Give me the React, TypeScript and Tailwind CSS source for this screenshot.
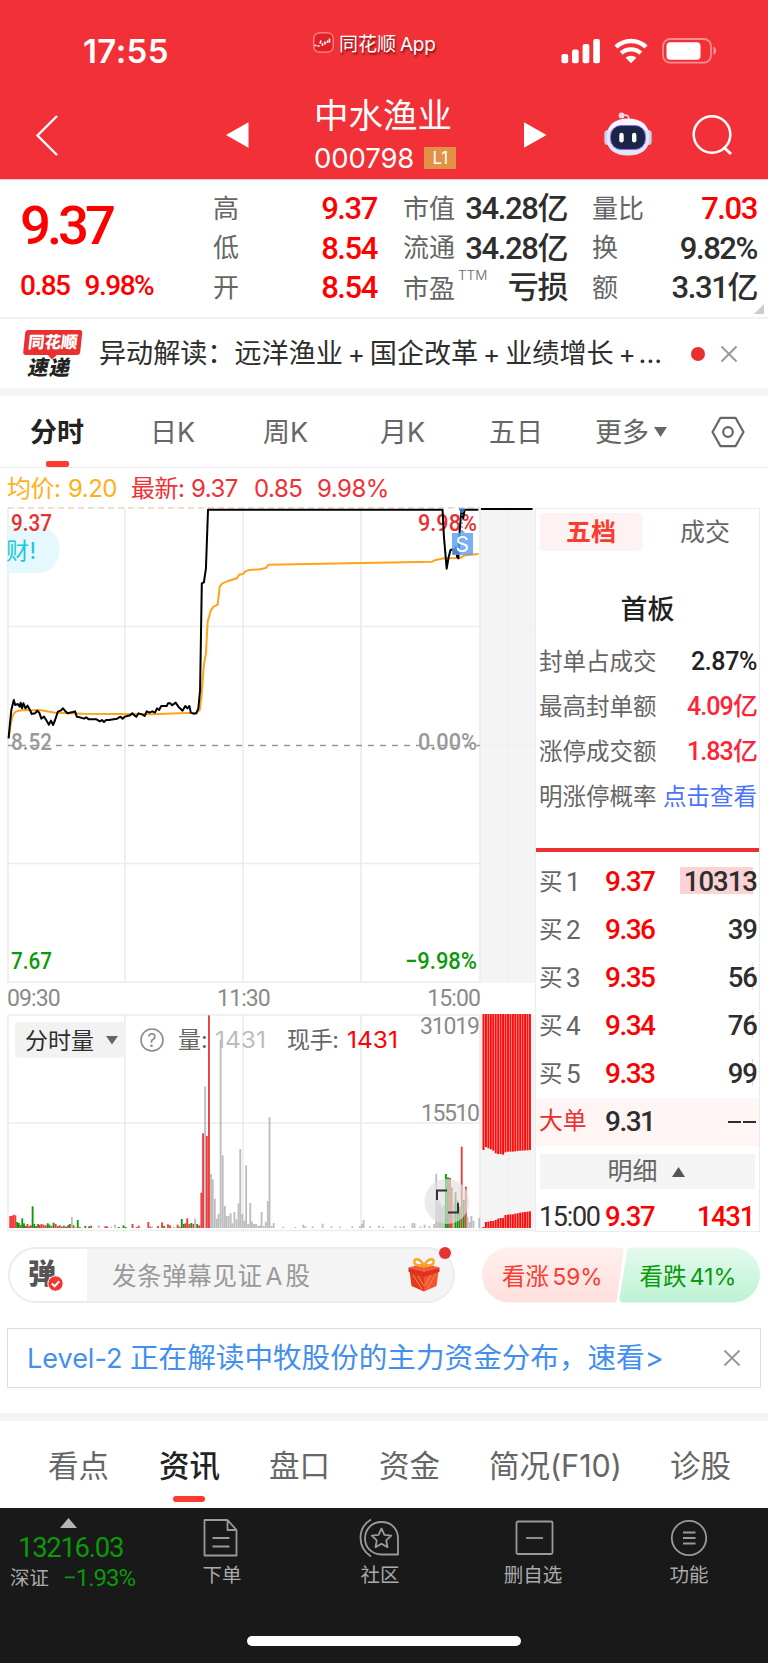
import type { ReactNode } from "react";

const NUM = "font-['Roboto','Noto_Sans_CJK_SC',sans-serif]";

function CloseIcon() {
    return (
        <svg className="h-[18px] w-[18px]" viewBox="0 0 18 18" fill="none" stroke="#999999" strokeWidth={1.9}>
            <path d="M1.5 1.5l15 15M16.5 1.5l-15 15" />
        </svg>
    );
}

function RobotIcon() {
    return (
        <svg className="h-[44px] w-[48px]" viewBox="0 0 48 44">
            <path d="M18 3.5c5-1.5 7 .5 7 4" fill="none" stroke="#e6e6fa" strokeWidth="1.6" />
            <circle cx="17.5" cy="3.4" r="2.9" fill="#f6d9e6" />
            <rect x="0.3" y="18" width="7" height="15" rx="3.5" fill="#c9cbf3" />
            <rect x="40.7" y="18" width="7" height="15" rx="3.5" fill="#c9cbf3" />
            <path d="M24 6.5C11 6.5 2.5 13 2.5 25.5S11 43.5 24 43.5s21.5-5.5 21.5-18S37 6.5 24 6.5z" fill="#e4e7fb" />
            <path d="M24 7C14 7 6 11 4 19c6-6 34-6 40 0C42 11 34 7 24 7z" fill="#f7f8ff" />
            <rect x="6.5" y="13.5" width="35" height="24" rx="10.5" fill="#1b2547" stroke="#8a6cf0" strokeWidth="1" />
            <rect x="15.300" y="20.8" width="4.4" height="9.6" rx="2.2" fill="#fff" />
            <rect x="28" y="20.8" width="4.4" height="9.6" rx="2.2" fill="#fff" />
        </svg>
    );
}

function StatusBar() {
    return (
        <div className="flex h-[84px] pl-[83px] text-white">
            <div className="w-[230px] pt-[35px] text-[33px] leading-none font-semibold tracking-[0.4px]">17:55</div>
            <div className="flex w-[247px] items-start gap-[5px] pt-[32px]">
                <svg className="h-[21px] w-[21px]" viewBox="0 0 21 21">
                    <rect x="0.8" y="0.8" width="19.4" height="19.4" rx="5.5" fill="#e02228" stroke="#ff8f92" strokeWidth="1.2" />
                    <path d="M1.5 13.5h2M4.5 14h2M7 11.5l1-3M9.5 11v3M12 12.5v-3M14.5 11V8.5M16.5 6.5v4" stroke="#fff" strokeWidth="1.6" />
                </svg>
                <span className="flex gap-[4px] pt-[3px] text-[19px] leading-none [text-shadow:1px_2px_2px_rgba(90,0,0,0.75)]">
                    <span>同花顺</span>
                    <span className="tracking-[-0.3px]">App</span>
                </span>
            </div>
            <div className="flex items-start pt-[38px]">
                <svg className="ml-[1px] h-[26px] w-[40px]" viewBox="0 0 40 26" fill="#fff">
                    <rect x="0.5" y="16" width="6.7" height="9.3" rx="2" />
                    <rect x="11" y="11.5" width="6.7" height="13.8" rx="2" />
                    <rect x="21.6" y="6" width="6.7" height="19.3" rx="2" />
                    <rect x="32.2" y="1" width="6.7" height="24.3" rx="2" />
                </svg>
                <svg className="ml-[13px] h-[26px] w-[34px]" viewBox="0 0 34 26" fill="none" stroke="#fff" strokeWidth="4.4">
                    <path d="M2 9C10.5 .9 23.5 .9 32 9" />
                    <path d="M7.2 15.2c5.6-5.1 14-5.1 19.6 0" />
                    <path d="M17 25.3l-5.4-5.5c3-2.7 7.800-2.7 10.8 0z" fill="#fff" stroke="none" />
                </svg>
                <svg className="ml-[14px] h-[26px] w-[55px]" viewBox="0 0 55 26">
                    <rect x="1" y="1" width="48" height="23.6" rx="7" fill="none" stroke="#fff" strokeOpacity=".45" strokeWidth="1.8" />
                    <rect x="4.5" y="4.3" width="34" height="17.5" rx="3.8" fill="#fff" />
                    <path d="M51.5 8.500c3.500 1.500 3.500 7 0 8.500z" fill="#fff" fillOpacity=".5" />
                </svg>
            </div>
        </div>
    );
}

function Header() {
    return (
        <header className="h-[179px] bg-[#f23037] text-white">
            <StatusBar />
            <div className="flex h-[95px]">
                <svg className="mt-[31px] ml-[35px] h-[41px] w-[24px]" viewBox="0 0 24 41" fill="none" stroke="#fff" strokeWidth="2.4">
                    <path d="M22 1L2.5 20.5 22 40" />
                </svg>
                <svg className="mt-[38px] ml-[167px] h-[26px] w-[23px]" viewBox="0 0 23 26" fill="#fff">
                    <path d="M0 13L22.5 .3v25.4z" />
                </svg>
                <div className="ml-[65px] w-[145px]">
                    <h1 className="mt-[15px] text-[34.5px] leading-none">中水渔业</h1>
                    <div className="mt-[10px] flex items-center">
                        <span className="text-[27.5px] leading-[29px] tracking-[-0.1px]">000798</span>
                        <span className="ml-[10px] h-[22px] w-[32px] bg-[#e39147] text-center text-[17px] leading-[22px]">L1</span>
                    </div>
                </div>
                <svg className="mt-[38px] ml-[65px] h-[26px] w-[23px]" viewBox="0 0 23 26" fill="#fff">
                    <path d="M22.5 13L0 .3v25.4z" />
                </svg>
                <div className="mt-[28px] ml-[57px]">
                    <RobotIcon />
                </div>
                <svg className="mt-[30px] ml-[40px] h-[42px] w-[42px]" viewBox="0 0 42 42" fill="none" stroke="#fff" strokeWidth="2.5">
                    <circle cx="20" cy="20.5" r="18.3" />
                    <path d="M31.5 33l7.5 7" strokeWidth="3" />
                </svg>
            </div>
        </header>
    );
}

function Stat({ label, value, red }: { label: ReactNode; value: string; red?: boolean }) {
    return (
        <div className="flex h-[39.5px] items-center justify-between">
            <span className="text-[26px] leading-none text-[#666666]">{label}</span>
            <span className={`${NUM} text-[31px] leading-none font-medium tracking-[-1.4px] ${red ? "text-[#ff0000]" : "text-[#2e2e2e]"}`}>{value}</span>
        </div>
    );
}

function Quote() {
    return (
        <section className="relative flex h-[140px] border-t border-b-2 border-t-[#fbc5c7] border-b-[#f2f2f2] pt-[9px]">
            <div className={`${NUM} ml-[20px] w-[193px] text-[#ff0000]`}>
                <div className="mt-[9px] text-[54.5px] leading-none font-medium tracking-[-4px]">9.37</div>
                <div className="mt-[19px] flex gap-[15px] text-[28px] leading-none font-medium tracking-[-1.5px]">
                    <span>0.85</span>
                    <span>9.98%</span>
                </div>
            </div>
            <div className="w-[164px]">
                <Stat label="高" value="9.37" red />
                <Stat label="低" value="8.54" red />
                <Stat label="开" value="8.54" red />
            </div>
            <div className="ml-[26px] w-[164px]">
                <Stat label="市值" value="34.28亿" />
                <Stat label="流通" value="34.28亿" />
                <Stat
                    label={
                        <span className="flex pt-[3px]">
                            市盈<span className="-mt-[7px] ml-[3px] text-[13.5px] font-light">TTM</span>
                        </span>
                    }
                    value="亏损"
                />
            </div>
            <div className="ml-[25px] w-[165px]">
                <Stat label="量比" value="7.03" red />
                <Stat label="换" value="9.82%" />
                <Stat label="额" value="3.31亿" />
            </div>
            <svg className="absolute right-[4px] bottom-[3px] h-[10px] w-[10px]" viewBox="0 0 10 10">
                <path d="M10 0v10H0z" fill="#cccccc" />
            </svg>
        </section>
    );
}

function Plus() {
    return <span className="w-[27px] text-center text-[26px]">+</span>;
}

function NewsStrip() {
    return (
        <section className="flex h-[69px] items-center">
            <div className="ml-[23px] w-[57px] -skew-x-6">
                <div className="relative rounded-[3px] bg-[#e93030] text-center text-[16.5px] leading-[25px] font-black text-white">
                    同花顺
                    <i className="absolute -bottom-[3px] left-[26px] h-[7px] w-[7px] rotate-45 bg-[#e93030]" />
                </div>
                <div className="mt-[3px] -skew-x-6 text-center text-[20.5px] leading-[20px] font-black tracking-[1px] text-[#222222]">速递</div>
            </div>
            <p className="ml-[19px] flex w-[592px] items-center text-[27.1px] leading-none text-[#2e2e2e]">
                异动解读：远洋渔业
                <Plus />
                国企改革
                <Plus />
                业绩增长
                <Plus />
                <span className="-ml-[2px]">...</span>
            </p>
            <i className="h-[14px] w-[14px] rounded-full bg-[#e93030]" />
            <div className="ml-[15px]">
                <CloseIcon />
            </div>
        </section>
    );
}

function PeriodTabs() {
    return (
        <nav className="flex h-[72px] items-start border-b-[1.5px] border-[#ececec] pt-[23px] text-[27px] leading-none text-[#666666]">
            <div className="ml-[30px] flex w-[120px] flex-col">
                <span className="font-bold text-[#222222]">分时</span>
                <i className="mt-[15px] ml-[16px] h-[6px] w-[23px] rounded-[2px] bg-[#fb3b30]" />
            </div>
            <span className="w-[113px]">日K</span>
            <span className="w-[117px]">周K</span>
            <span className="w-[109px]">月K</span>
            <span className="w-[106px]">五日</span>
            <span className="w-[59px]">更多</span>
            <svg className="mt-[8px] h-[10px] w-[13px]" viewBox="0 0 13 10" fill="#666666">
                <path d="M0 0h13L6.5 10z" />
            </svg>
            <svg className="-mt-[3px] ml-[44px] h-[32px] w-[34px]" viewBox="0 0 34 32" fill="none" stroke="#666666" strokeWidth="2.2">
                <path d="M9.5 1.8h15L32.5 16l-8 14.2h-15L1.5 16z" strokeLinejoin="round" />
                <circle cx="17" cy="16" r="4.8" />
            </svg>
        </nav>
    );
}

function Legend() {
    return (
        <div className="flex h-[39px] items-center pt-[2px] pl-[7px] text-[24px] leading-none tracking-[-0.5px] text-[#f03034]">
            <span className="w-[61px] text-[#ffb019]">均价:</span>
            <span className="w-[63px] text-[#ffb019]">9.20</span>
            <span className="w-[60px]">最新:</span>
            <span className="w-[63px]">9.37</span>
            <span className="w-[63px]">0.85</span>
            <span>9.98%</span>
        </div>
    );
}

const PRICE =
    "25,745 28,710 33,660 40,630 44,645 52,642 57,650 60,638 64,655 68,640 74,655 80,647 88,662 92,672 102,670 108,662 114,668 120,686 128,680 134,690 142,704 148,692 154,705 160,690 168,665 176,662 183,655 190,664 196,670 212,666 218,664 223,680 232,682 244,686 250,682 258,688 280,688 290,694 296,690 302,696 308,690 316,690 340,686 350,680 356,686 362,680 378,676 384,670 390,676 396,680 402,670 414,674 420,678 426,664 434,668 442,664 450,668 456,655 462,660 468,648 484,648 488,640 494,640 500,646 510,638 518,650 530,662 538,648 544,655 550,648 554,668 562,671 570,670 576,655 581,600 586,280 592,277 598,235 604,59 1285,59 1289,140 1297,236 1302,205 1308,180 1316,178 1318,192 1324,172 1327,200 1331,205 1335,120 1340,60 1345,85 1349,59 1389,59";
const AVERAGE =
    "25,745 30,710 36,680 42,668 50,663 70,660 120,661 160,668 240,671 340,672 440,673 520,670 570,668 580,660 585,620 592,525 598,490 603,395 612,362 620,350 632,344 638,290 646,280 665,272 688,265 694,254 706,252 712,244 724,240 755,238 772,234 780,224 1050,219 1255,215 1262,211 1290,205 1335,204 1350,196 1390,192";

function PriceChart() {
    return (
        <svg className="block h-[476px] w-[535px]" viewBox="0 0 535 476" fill="none">
            <rect x="480.5" y="1.5" width="54.5" height="475" fill="#f4f4f4" />
            <path d="M508.5 2v473M481 120h54M481 238h54M481 357h54" stroke="#eaeaea" strokeDasharray="2 2" />
            <path d="M8 1v474M125 1v474M243 1v474M361 1v474M480 1v474M8 119.5h472M8 356.5h472M7 475h473" stroke="#ececec" strokeWidth="1.6" />
            <path d="M8 .8h472" stroke="#e6cfae" strokeDasharray="6 4" strokeWidth="1.2" />
            <path d="M8 19h29c30 0 30 47 0 47H8z" fill="#e4f8fd" />
            <text x="6" y="51.5" fontSize="23" fill="#19c8da" textLength="30">财!</text>
            <path d="M8 238.5h472" stroke="#999999" strokeDasharray="6 6" strokeWidth="1.3" />
            <g className={`${NUM} font-medium`} fontSize="23">
                <text x="11" y="24" fill="#e93030" textLength="41" lengthAdjust="spacingAndGlyphs">9.37</text>
                <text x="418" y="24" fill="#e93030" textLength="59" lengthAdjust="spacingAndGlyphs">9.98%</text>
                <text x="11" y="243" fill="#999999" textLength="41" lengthAdjust="spacingAndGlyphs">8.52</text>
                <text x="418" y="243" fill="#999999" textLength="59" lengthAdjust="spacingAndGlyphs">0.00%</text>
                <text x="11" y="462" fill="#0a9a0a" textLength="41" lengthAdjust="spacingAndGlyphs">7.67</text>
                <text x="405" y="462" fill="#0a9a0a" textLength="72" lengthAdjust="spacingAndGlyphs">−9.98%</text>
            </g>
            <g transform="translate(0 -17) scale(.34439 .33333)" strokeLinejoin="round">
                <polyline points={AVERAGE} stroke="#ffa31a" strokeWidth="2" vectorEffect="non-scaling-stroke" />
                <polyline points={PRICE} stroke="#000" strokeWidth="2" vectorEffect="non-scaling-stroke" />
            </g>
            <path d="M481 2h51.5" stroke="#000" strokeWidth="2.2" />
            <path d="M459 2h6l-3 4z" fill="#2e6fd0" stroke="#2e6fd0" />
            <path d="M462 7v18" stroke="#4b8fe8" strokeDasharray="2 2" strokeWidth="1.2" />
            <path d="M452 26h8l2.5-3 2.5 3h8v22h-21z" fill="#5b9df0" fillOpacity=".82" />
            <text x="455.5" y="45" fontSize="21" fill="#fff">S</text>
        </svg>
    );
}

type Bar = [x: number, top: number, color: string];
const R = "#ee3a3a";
const G = "#0a9a0a";
const S = "#bdbdbd";

const VOLUME: Bar[] = [
    [27, 828, R], [32, 828, R], [37, 824, R], [42, 826, R], [47, 846, G], [52, 849, G], [57, 855, R], [62, 835, G], [67, 850, G], [72, 858, G],
    [77, 852, R], [82, 858, R], [87, 856, R], [92, 799, G], [97, 852, G], [102, 858, R], [108, 852, G], [113, 855, R], [118, 852, R], [124, 854, R],
    [130, 856, R], [136, 850, G], [141, 854, G], [147, 858, R], [153, 848, G], [159, 852, R], [165, 858, R], [171, 856, R], [177, 860, G], [183, 857, R],
    [189, 860, G], [195, 856, R], [200, 852, G], [206, 831, S], [211, 856, R], [217, 861, S], [223, 840, G], [229, 861, R], [245, 858, G], [256, 859, G],
    [262, 857, R], [284, 856, S], [303, 859, R], [308, 859, R], [320, 861, S], [331, 854, S], [342, 861, G], [356, 856, G], [362, 861, G], [382, 852, R],
    [394, 861, R], [400, 857, R], [428, 846, R], [434, 860, R], [440, 860, S], [456, 858, R], [468, 847, R], [474, 858, G], [485, 853, R], [491, 856, R],
    [502, 860, S], [513, 854, R], [519, 860, R], [525, 837, G], [531, 852, G], [536, 850, R], [541, 835, R], [547, 852, R], [553, 849, G], [559, 852, R],
    [564, 836, S], [570, 852, G], [576, 856, R], [582, 758, R], [587, 580, R], [593, 439, S], [598, 588, R], [604, 226, R], [610, 702, S], [615, 718, S],
    [621, 776, S], [627, 836, S], [632, 822, S], [638, 300, S], [644, 646, S], [650, 798, S], [655, 828, S], [661, 828, S], [667, 820, S], [672, 850, S],
    [678, 816, S], [684, 838, S], [690, 790, S], [695, 627, S], [701, 822, S], [707, 842, S], [712, 676, S], [718, 852, S], [724, 789, S], [729, 845, S],
    [735, 852, S], [741, 852, S], [747, 858, S], [752, 856, S], [757, 816, S], [763, 858, S], [769, 845, S], [775, 783, S], [780, 532, S], [786, 858, S],
    [792, 849, S], [820, 860, S], [855, 861, S], [878, 854, S], [884, 858, S], [905, 859, S], [934, 851, S], [960, 859, S], [985, 860, S], [1020, 859, S],
    [1042, 858, S], [1048, 852, S], [1053, 840, S], [1072, 859, S], [1098, 857, S], [1110, 860, S], [1145, 858, S], [1160, 860, S], [1170, 858, S], [1195, 849, S],
    [1201, 850, S], [1218, 860, S], [1230, 854, S], [1244, 858, S], [1258, 852, S], [1264, 701, S], [1270, 780, S], [1275, 790, S], [1281, 802, S], [1287, 795, S],
    [1292, 702, G], [1298, 712, G], [1304, 714, R], [1309, 742, R], [1315, 790, S], [1320, 757, G], [1326, 782, G], [1332, 800, G], [1338, 620, R], [1344, 780, G],
    [1350, 740, R], [1355, 830, S], [1361, 846, S], [1366, 828, S], [1372, 842, S], [1389, 834, S],
];

const AUCTION: [number, number][] = [
    [630, 861], [621, 846], [625, 845], [628, 843], [632, 843], [640, 840], [642, 836], [642, 834], [644, 834], [637, 825],
    [635, 824], [635, 823], [635, 823], [634, 821], [633, 820], [632, 818], [632, 817], [631, 816], [631, 815], [630, 814],
];

function VolumeChart() {
    return (
        <svg className="block h-[218px] w-[535px]" viewBox="0 0 535 218" fill="none">
            <rect x="480.5" y="1" width="54.5" height="215" fill="#f4f4f4" />
            <path d="M8 1v216M125 1v216M243 1v216M361 1v216M480 1v216M8 1h472M8 109h472M7 216.5h528" stroke="#ececec" strokeWidth="1.6" />
            <path d="M508.5 140v74" stroke="#e4e4e4" strokeDasharray="2 2" />
            <rect x="15" y="8" width="111" height="35.5" rx="3" fill="#f2f2f2" />
            <text x="25" y="34.5" fontSize="23" fill="#2e2e2e" textLength="69">分时量</text>
            <path d="M106 22h12l-6 8.5z" fill="#666666" />
            <circle cx="152" cy="26" r="11" stroke="#8a8a8a" strokeWidth="1.6" />
            <text x="147.2" y="32.5" fontSize="18" fill="#8a8a8a">?</text>
            <g transform="translate(0 -74) scale(.34439 .33333)">
                {VOLUME.map(([x, top, color]) => (
                    <rect key={x} x={x} y={top} width="5.4" height={864 - top} fill={color} />
                ))}
                {AUCTION.map(([upper, lower], i) => (
                    <g key={i} fill="#ff0d0d">
                        <rect x={1401 + i * 7.1} y="222" width="5.8" height={upper - 222} />
                        <rect x={1401 + i * 7.1} y={lower} width="5.8" height={864 - lower} />
                    </g>
                ))}
            </g>
            <g fontSize="23">
                <text x="178" y="34" fill="#666666">量:</text>
                <text x="287" y="34" fill="#666666" textLength="52">现手:</text>
                <text x="215" y="34" fill="#bdbdbd" textLength="51" lengthAdjust="spacingAndGlyphs">1431</text>
                <text x="347" y="34" fill="#ff0000" textLength="51" lengthAdjust="spacingAndGlyphs">1431</text>
            </g>
            <g className={NUM} fontSize="23" fill="#8a8a8a">
                <text x="420" y="20" textLength="60">31019</text>
                <text x="421" y="107" textLength="59">15510</text>
            </g>
            <circle cx="447" cy="187.5" r="22.5" fill="#e0e0e0" fillOpacity=".68" />
            <path d="M437 186v-9.5h10M448 198.5h10v-9.5" stroke="#333333" strokeWidth="2" />
        </svg>
    );
}

function SealRow({ label, value, tone }: { label: string; value: string; tone: string }) {
    return (
        <div className="flex h-[45.1px] items-center justify-between pr-[2px] pl-[3px] text-[23.5px] leading-none">
            <span className="text-[#666666]">{label}</span>
            <span className={tone}>{value}</span>
        </div>
    );
}

const bids = [
    { level: "1", price: "9.37", qty: "10313", mark: "w-[73px] bg-[#fbd3d4]" },
    { level: "2", price: "9.36", qty: "39", mark: "w-0" },
    { level: "3", price: "9.35", qty: "56", mark: "w-px bg-[#fbd3d4]" },
    { level: "4", price: "9.34", qty: "76", mark: "w-px bg-[#fbd3d4]" },
    { level: "5", price: "9.33", qty: "99", mark: "w-px bg-[#fbd3d4]" },
];

function OrderBook() {
    return (
        <aside className="mt-px h-[724px] w-[225px] overflow-hidden border-[1.5px] border-[#ececec] text-[#2e2e2e]">
            <div className="mt-[4px] ml-[4px] flex h-[38px] text-[25px] leading-[39px]">
                <span className="w-[102px] rounded-[3px] bg-[#fff2f2] text-center font-bold text-[#fb3b30]">五档</span>
                <span className="ml-[38px] text-[#666666]">成交</span>
            </div>
            <h2 className="mt-[45px] text-center text-[27px] leading-none font-medium text-[#222222]">首板</h2>
            <div className="mt-[16px] h-[208px]">
                <SealRow label="封单占成交" value="2.87%" tone={`${NUM} text-[25px] font-medium tracking-[-0.4px] text-[#222222]`} />
                <SealRow label="最高封单额" value="4.09亿" tone={`${NUM} text-[25px] font-medium tracking-[-0.9px] text-[#ff2436]`} />
                <SealRow label="涨停成交额" value="1.83亿" tone={`${NUM} text-[25px] font-medium tracking-[-0.9px] text-[#ff2436]`} />
                <SealRow label="明涨停概率" value="点击查看" tone="text-[#4b72ff]" />
            </div>
            <div className="mt-px h-[4px] bg-[#ee3033]" />
            <div className="mt-[6px]">
                {bids.map((b) => (
                    <div key={b.level} className="relative flex h-[48px] items-center pr-[2px] pl-[3px]">
                        <i className={`absolute top-[9px] right-[6px] h-[27px] ${b.mark}`} />
                        <span className="w-[27px] text-[23.5px] leading-none text-[#666666]">买</span>
                        <span className={`${NUM} w-[39px] text-[26px] leading-none text-[#666666]`}>{b.level}</span>
                        <span className={`${NUM} text-[28px] leading-none font-medium tracking-[-1.5px] text-[#ff0000]`}>{b.price}</span>
                        <span className={`${NUM} relative ml-auto text-[27.5px] leading-none font-medium tracking-[-1px]`}>{b.qty}</span>
                    </div>
                ))}
            </div>
            <div className={`${NUM} flex h-[48px] items-center bg-[#fff5f5] pr-[3px] pl-[3px] text-[28px] leading-none font-medium`}>
                <span className="w-[66px] text-[23.8px] font-normal text-[#e93030]">大单</span>
                <span className="tracking-[-1.5px]">9.31</span>
                <span className="ml-auto flex gap-[2px]">
                    <i className="h-[2.5px] w-[13px] bg-[#2e2e2e]" />
                    <i className="h-[2.5px] w-[13px] bg-[#2e2e2e]" />
                </span>
            </div>
            <div className="mx-[4px] mt-[8px] flex h-[35px] items-center justify-center gap-[14px] bg-[#f4f4f4] pr-[3px] text-[25px] leading-none text-[#666666]">
                明细
                <svg className="h-[10px] w-[13px]" viewBox="0 0 13 10" fill="#555555">
                    <path d="M0 10h13L6.5 0z" />
                </svg>
            </div>
            <div className={`${NUM} mt-[13px] flex items-center pr-[5px] pl-[3px] text-[27.5px] leading-[30px] font-medium tracking-[-1.3px]`}>
                <span className="w-[66px] text-[27px] font-normal">15:00</span>
                <span className="text-[#ff0000]">9.37</span>
                <span className="ml-auto text-[#ff0000]">1431</span>
            </div>
        </aside>
    );
}

function Market() {
    return (
        <section className="flex h-[725px]">
            <div className="w-[535px]">
                <PriceChart />
                <div className={`${NUM} flex h-[31px] items-center justify-between pr-[55px] pl-[7px] text-[23px] leading-none tracking-[-0.9px] text-[#8a8a8a]`}>
                    <span>09:30</span>
                    <span>11:30</span>
                    <span>15:00</span>
                </div>
                <VolumeChart />
            </div>
            <OrderBook />
        </section>
    );
}

function GiftIcon() {
    return (
        <svg className="h-[35px] w-[32px]" viewBox="0 0 32 35">
            <path d="M1.5 14L16 19v15.5L3.5 29z" fill="#e5391f" />
            <path d="M30.5 14L16 19v15.5L28.5 29z" fill="#f0552f" />
            <path d="M5 18l9 14M10 19l6 10M28 17l-9 15M23 18l-6 11" stroke="#f98a55" strokeWidth="1" />
            <path d="M.5 10.5L16 14.500l15.500-4v4.300L16 20 .5 14.800z" fill="#dc3320" />
            <path d="M.5 10.500L16 6.500l15.500 4L16 14.800z" fill="#f4583d" />
            <path d="M16 9C12 0 5 1 6.500 6c1 3 5.500 3 9.500 3 4 0 8.500 0 9.500-3C27 1 20 0 16 9z" fill="none" stroke="#f5a623" strokeWidth="2.4" />
        </svg>
    );
}

function Danmu() {
    return (
        <section className="flex h-[96px] pt-[15px] pl-[8px]">
            <div className="relative flex h-[56px] w-[447px] items-center rounded-full border-2 border-[#ececec] bg-[#f4f4f4]">
                <div className="relative h-full w-[77px] rounded-l-full bg-white">
                    <span className="absolute top-[11px] left-[18px] text-[28px] leading-none font-black text-[#555555]">弹</span>
                    <svg className="absolute top-[26px] left-[37px] h-[17px] w-[17px]" viewBox="0 0 17 17">
                        <circle cx="8.5" cy="8.5" r="7.7" fill="#f4352f" stroke="#fff" />
                        <path d="M4.8 8.5l2.8 2.8 4.7-5" fill="none" stroke="#fff" strokeWidth="2" />
                    </svg>
                </div>
                <span className="ml-[25px] flex gap-[3px] pt-[2px] text-[24.5px] leading-none text-[#999999]">
                    <span className="tracking-[0.6px]">发条弹幕见证</span>
                    <span>A</span>
                    <span>股</span>
                </span>
                <div className="absolute top-[8px] left-[398px]">
                    <GiftIcon />
                </div>
                <i className="absolute -top-[2px] left-[429px] h-[12px] w-[12px] rounded-full bg-[#e93030]" />
            </div>
            <svg className="ml-[27px] h-[56px] w-[279px]" viewBox="0 0 279 56">
                <defs>
                    <linearGradient id="up" x1="0" y1="0" x2="0" y2="1">
                        <stop stopColor="#ffefee" />
                        <stop offset="1" stopColor="#ffe0dd" />
                    </linearGradient>
                    <linearGradient id="down" x1="0" y1="0" x2="0" y2="1">
                        <stop stopColor="#e4faee" />
                        <stop offset="1" stopColor="#bdf2d4" />
                    </linearGradient>
                </defs>
                <path d="M27.5.5H138a3.5 3.5 0 013.5 4L135 52a4 4 0 01-4 3.5H27.5a27.5 27.5 0 010-55z" fill="url(#up)" />
                <path d="M250.500.5H149a4 4 0 00-4 3.5l-7.5 47.5a3.5 3.5 0 003.5 4h109.500a27.500 27.500 0 000-55z" fill="url(#down)" />
                <g fontSize="23.5">
                    <text x="20" y="37.5" fill="#fb3b30">看涨</text>
                    <text x="70.5" y="37.5" fill="#fb3b30" textLength="50" lengthAdjust="spacingAndGlyphs">59%</text>
                    <text x="157.500" y="37.5" fill="#0a9a0a">看跌</text>
                    <text x="207.500" y="37.5" fill="#0a9a0a" textLength="47" lengthAdjust="spacingAndGlyphs">41%</text>
                </g>
            </svg>
        </section>
    );
}

const sections = [
    { label: "看点", width: "w-[111px]" },
    { label: "资讯", width: "w-[110px]", active: true },
    { label: "盘口", width: "w-[110px]" },
    { label: "资金", width: "w-[110px]" },
    { label: "简况(F10)", width: "w-[181px]" },
    { label: "诊股", width: "w-[70px]" },
];

function SectionTabs() {
    return (
        <nav className="flex h-[95px] border-t-8 border-[#f4f4f4] pt-[30px] pl-[48px] text-[30.5px] leading-none text-[#666666]">
            {sections.map((s) => (
                <div key={s.label} className={`${s.width} shrink-0 whitespace-nowrap`}>
                    <span className={s.active ? "font-medium text-[#222222]" : ""}>{s.label}</span>
                    {s.active && <i className="mt-[14px] ml-[14px] block h-[6px] w-[32px] rounded-[3px] bg-[#fb3b30]" />}
                </div>
            ))}
        </nav>
    );
}

function FooterItem({ label, children }: { label: string; children: ReactNode }) {
    return (
        <div className="flex w-[80px] flex-col items-center text-[19.5px] leading-none text-[#aaaaaa]">
            <svg className="mb-[8px] h-[40px] w-[42px]" viewBox="0 0 42 40" fill="none" stroke="#9a9a9a" strokeWidth="1.8" strokeLinejoin="round">
                {children}
            </svg>
            {label}
        </div>
    );
}

function Footer() {
    return (
        <footer className="flex h-[155px] flex-col items-center justify-between bg-[#191919] pb-[17px]">
            <div className="flex w-full pt-[10px]">
                <div className={`${NUM} w-[140px] pl-[10px] text-[#0a9a0a]`}>
                    <svg className="ml-[50px] h-[10px] w-[17px]" viewBox="0 0 17 10" fill="#b5b5b5">
                        <path d="M0 10h17L8.5 0z" />
                    </svg>
                    <div className="mt-[6px] ml-[8px] text-[27.5px] leading-[28px] tracking-[-1.3px]">13216.03</div>
                    <div className="mt-[2px] flex text-[24px] leading-[28px] tracking-[-1px]">
                        <span className="w-[53px] pt-px text-[19.5px] tracking-normal text-[#aaaaaa]">深证</span>
                        −1.93%
                    </div>
                </div>
                <div className="ml-[42px] flex">
                    <FooterItem label="下单">
                        <path d="M3.5 2h23l9 10v25.5h-32zM26.5 2v10h9M11.500 20h17M11.500 28.5h17" />
                    </FooterItem>
                    <div className="ml-[78px]">
                        <FooterItem label="社区">
                            <path d="M12 1.5C-2 10-2 29 12 38.5M22.500 4C12 4 6 12 6 20.5S12.500 36.500 22.500 36.500H39v-16C39 12 33.500 4 22.500 4z" />
                            <path d="M22.500 10.5l2.900 6.300 6.900.800-5.100 4.700 1.300 6.800-6-3.400-6 3.400 1.300-6.800-5.100-4.700 6.900-.800z" />
                        </FooterItem>
                    </div>
                    <div className="ml-[73px]">
                        <FooterItem label="删自选">
                            <rect x="4.5" y="3.5" width="36" height="32.5" rx="1.5" />
                            <path d="M14 20h17" />
                        </FooterItem>
                    </div>
                    <div className="ml-[76px]">
                        <FooterItem label="功能">
                            <circle cx="21" cy="20" r="17.2" />
                            <path d="M15 14.5h12.5M15 20h12.5M15 25.5h12.5" />
                        </FooterItem>
                    </div>
                </div>
            </div>
            <div className="h-[10px] w-[274px] rounded-full bg-white" />
        </footer>
    );
}

export default function App() {
    return (
        <div className="w-[768px] overflow-hidden bg-white font-['Inter','Noto_Sans_CJK_SC',sans-serif]">
            <Header />
            <Quote />
            <NewsStrip />
            <div className="h-[8px] bg-[#f4f4f4]" />
            <PeriodTabs />
            <Legend />
            <Market />
            <Danmu />
            <section className="mx-[7px] flex h-[60px] items-center border-[1.5px] border-[#dddddd] pr-[19px] pl-[19px] text-[28.6px] leading-none whitespace-nowrap text-[#438ff0]">
                <span className="w-[103px] text-[27px]">Level-2</span>
                <span>正在解读中牧股份的主力资金分布，速看&gt;</span>
                <div className="ml-auto">
                    <CloseIcon />
                </div>
            </section>
            <div className="h-[25px]" />
            <SectionTabs />
            <Footer />
        </div>
    );
}
